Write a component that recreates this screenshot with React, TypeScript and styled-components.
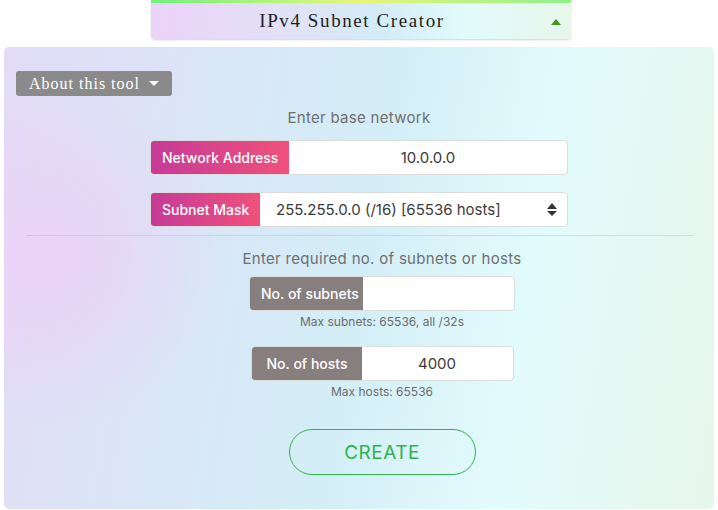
import React from 'react';
import styled, { createGlobalStyle } from 'styled-components';

const Global = createGlobalStyle`
  html, body {
    margin: 0;
    padding: 0;
    background: #fff;
  }
  body {
    font-family: Inter, "Liberation Sans", sans-serif;
  }
`;

const pastel = `linear-gradient(90deg, #ecd3f9 0%, #e2e0f6 30%, #d3ecf6 55%, #e2fbfc 75%, #e8f6ea 100%)`;

const Header = styled.div`
  width: 420px;
  height: 39px;
  margin: 0 auto 0 151px;
  box-sizing: border-box;
  position: relative;
  background: ${pastel};
  border-radius: 0 0 4px 4px;
  box-shadow: 0 1px 2px rgba(0, 0, 0, 0.18);
  display: flex;
  align-items: center;
  justify-content: center;
  padding: 3px 18px 0 0;
  &::before {
    content: '';
    position: absolute;
    left: 0;
    right: 0;
    top: 0;
    height: 3px;
    background: linear-gradient(90deg, #6ef07e 0%, #e9f57a 50%, #8ef28a 100%);
  }
`;

const Title = styled.h1`
  margin: 0;
  font-family: "Liberation Serif", serif;
  font-weight: normal;
  font-size: 19px;
  letter-spacing: 1.6px;
  color: #1f1f1f;
`;

const Caret = styled.span<{ $dir: 'up' | 'down'; $color: string }>`
  display: inline-block;
  width: 0;
  height: 0;
  border-left: 5px solid transparent;
  border-right: 5px solid transparent;
  ${(p) =>
    p.$dir === 'up'
      ? `border-bottom: 6px solid ${p.$color};`
      : `border-top: 5px solid ${p.$color};`}
`;

const HeaderCaret = styled.div`
  position: absolute;
  right: 10px;
  top: 19px;
  display: flex;
`;

const Panel = styled.div`
  margin: 8px 4px 0 4px;
  width: 710px;
  height: 462px;
  box-sizing: border-box;
  border-radius: 5px;
  background:
    radial-gradient(circle at 46px 208px, rgba(240, 205, 248, 0.75) 0px, rgba(236, 212, 248, 0) 170px),
    linear-gradient(100deg, #e3dcf7 0%, #d9e6f6 28%, #d3eef7 50%, #e2fbfc 72%, #e7f6ea 100%);
  padding: 24px 12px 0 12px;
  display: flex;
  flex-direction: column;
`;

const AboutButton = styled.button`
  align-self: flex-start;
  display: flex;
  align-items: center;
  gap: 9px;
  height: 25px;
  padding: 0 13px 0 13px;
  border: none;
  border-radius: 3px;
  background: #8a8a8a;
  color: #fff;
  font-family: "Liberation Serif", serif;
  font-size: 16px;
  letter-spacing: 1px;
  cursor: pointer;
`;

const Prompt = styled.div`
  text-align: center;
  color: #6f6f6f;
  font-size: 15px;
  letter-spacing: 0.3px;
`;

const Section = styled.div<{ $shift: number }>`
  display: flex;
  flex-direction: column;
  align-items: center;
  margin-left: ${(p) => p.$shift}px;
`;

const Group = styled.div<{ $width: number }>`
  width: ${(p) => p.$width}px;
  height: 35px;
  display: flex;
  border-radius: 4px;
  border: 1px solid #dcdcdc;
  box-sizing: border-box;
  overflow: hidden;
  background: #fff;
`;

const Label = styled.div<{ $width: number; $tone: 'pink' | 'grey'; $pad: number }>`
  width: ${(p) => p.$width}px;
  flex-shrink: 0;
  display: flex;
  align-items: center;
  padding-left: ${(p) => p.$pad}px;
  box-sizing: border-box;
  color: #fff;
  font-size: 14px;
  font-weight: 500;
  white-space: nowrap;
  background: ${(p) =>
    p.$tone === 'pink' ? 'linear-gradient(90deg, #c63b98 0%, #f0517b 100%)' : '#877e7e'};
`;

const Field = styled.div`
  flex: 1;
  display: flex;
  align-items: center;
  justify-content: center;
  color: #3a3a3a;
  font-size: 15px;
`;

const SelectField = styled.div`
  flex: 1;
  display: flex;
  align-items: center;
  justify-content: space-between;
  padding: 0 10px 0 16px;
  color: #3a3a3a;
  font-size: 15px;
`;

const Arrows = styled.div`
  display: flex;
  flex-direction: column;
  gap: 2px;
`;

const Divider = styled.hr`
  border: none;
  border-top: 1px solid rgba(120, 120, 140, 0.18);
  margin: 8px 8px 0 11px;
`;

const Hint = styled.div`
  font-size: 12px;
  color: #6c6c6c;
  margin-top: 3px;
`;

const CreateButton = styled.button`
  width: 187px;
  height: 46px;
  border-radius: 23px;
  border: 1px solid #35b14d;
  background: transparent;
  color: #2fb24c;
  font-family: Inter, "Liberation Sans", sans-serif;
  font-size: 19px;
  letter-spacing: 0.5px;
  cursor: pointer;
`;

const Spacer = styled.div<{ $h: number }>`
  height: ${(p) => p.$h}px;
  flex-shrink: 0;
`;

export default function App() {
  return (
    <>
      <Global />
      <Header>
        <Title>IPv4 Subnet Creator</Title>
        <HeaderCaret>
          <Caret $dir="up" $color="#3a9a12" />
        </HeaderCaret>
      </Header>
      <Panel>
        <AboutButton>
          About this tool
          <Caret $dir="down" $color="#fff" />
        </AboutButton>
        <Spacer $h={12} />
        <Section $shift={0}>
          <Prompt>Enter base network</Prompt>
          <Spacer $h={13} />
          <Group $width={418}>
            <Label $width={138} $tone="pink" $pad={11}>Network Address</Label>
            <Field>10.0.0.0</Field>
          </Group>
          <Spacer $h={17} />
          <Group $width={418}>
            <Label $width={109} $tone="pink" $pad={11}>Subnet Mask</Label>
            <SelectField>
              <span>255.255.0.0 (/16) [65536 hosts]</span>
              <Arrows>
                <Caret $dir="up" $color="#333" />
                <Caret $dir="down" $color="#333" />
              </Arrows>
            </SelectField>
          </Group>
        </Section>
        <Divider />
        <Spacer $h={13} />
        <Section $shift={46}>
          <Prompt>Enter required no. of subnets or hosts</Prompt>
          <Spacer $h={8} />
          <Group $width={266}>
            <Label $width={113} $tone="grey" $pad={11}>No. of subnets</Label>
            <Field />
          </Group>
          <Hint>Max subnets: 65536, all /32s</Hint>
          <Spacer $h={17} />
          <Group $width={263}>
            <Label $width={110} $tone="grey" $pad={15}>No. of hosts</Label>
            <Field>4000</Field>
          </Group>
          <Hint>Max hosts: 65536</Hint>
          <Spacer $h={30} />
          <CreateButton>CREATE</CreateButton>
        </Section>
      </Panel>
    </>
  );
}
